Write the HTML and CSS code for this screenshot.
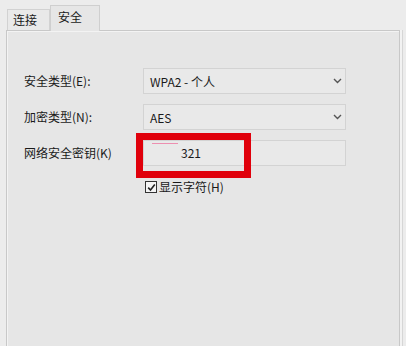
FILE: index.html
```html
<!DOCTYPE html>
<html lang="zh-CN">
<head>
<meta charset="utf-8">
<link rel="stylesheet" href="styles.css">
</head>
<body>
<div class="tabs">
  <div class="tab">连接</div>
  <div class="tab active">安全</div>
</div>
<div class="panel">
  <div class="row">
    <div class="label">安全类型(E):</div>
    <div class="field select"><span>WPA2 - 个人</span>
      <svg class="chev" width="9" height="6" viewBox="0 0 9 6"><path d="M1 1 L4.5 4.5 L8 1" fill="none" stroke="#555" stroke-width="1.4"/></svg>
    </div>
  </div>
  <div class="row">
    <div class="label">加密类型(N):</div>
    <div class="field select"><span>AES</span>
      <svg class="chev" width="9" height="6" viewBox="0 0 9 6"><path d="M1 1 L4.5 4.5 L8 1" fill="none" stroke="#555" stroke-width="1.4"/></svg>
    </div>
  </div>
  <div class="row">
    <div class="label">网络安全密钥(K)</div>
    <div class="field input">
      <span class="mark"></span>
      <span class="key">321</span>
      <div class="redbox"></div>
    </div>
  </div>
  <div class="checkrow">
    <span class="box">
      <svg width="9" height="9" viewBox="0 0 9 9"><path d="M1.2 4.6 L3.5 7 L7.8 1.6" fill="none" stroke="#222" stroke-width="1.6"/></svg>
    </span>
    <span class="checklabel">显示字符(H)</span>
  </div>
</div>
</body>
</html>
```

FILE: styles.css
```css
html, body {
  margin: 0;
  padding: 0;
}
body {
  width: 406px;
  height: 346px;
  overflow: hidden;
  background: #ececec;
  font-family: "Noto Sans CJK SC", "Noto Sans", sans-serif;
  font-size: 12px;
  color: #1a1a1a;
}
.tabs {
  display: flex;
  align-items: flex-end;
  height: 30px;
  padding-left: 7px;
  box-sizing: border-box;
}
.tab {
  box-sizing: border-box;
  height: 21px;
  padding: 2px 0 0 5px;
  width: 43px;
  border: 1px solid #d2d2d2;
  border-bottom: none;
  background: #e9e9e9;
  line-height: 16px;
}
.tab.active {
  height: 26px;
  width: 50px;
  padding: 3px 0 0 7px;
  background: #e6e6e6;
  border-color: #cfcfcf;
  margin-bottom: -1px;
  position: relative;
  z-index: 1;
}
.panel {
  margin: 0 6px 0 6px;
  height: 330px;
  box-sizing: border-box;
  border: 1px solid #c8c8c8;
  box-shadow: inset 1px 1px 0 #f3f3f3, 2px 0 0 #f2f2f2, 3px 0 0 #d6d6d6;
  background: #e6e6e6;
  padding: 37px 0 0 17px;
  display: flex;
  flex-direction: column;
  gap: 10px;
}
.row {
  display: flex;
  align-items: center;
  height: 26px;
}
.label {
  width: 119px;
  line-height: 16px;
}
.field {
  position: relative;
  box-sizing: border-box;
  width: 203px;
  height: 26px;
  border: 1px solid #d3d3d3;
  background: #e9e9e9;
  display: flex;
  align-items: center;
  padding-left: 6px;
}
.select span {
  flex: 1;
}
.chev {
  margin-right: 3px;
}
.input {
  padding-left: 37px;
}
.key {
  line-height: 16px;
}
.mark {
  position: absolute;
  left: 8px;
  top: 2px;
  width: 26px;
  height: 1px;
  background: #ec8fb0;
}
.redbox {
  position: absolute;
  left: -8px;
  top: -8px;
  width: 115px;
  height: 45px;
  border: 7px solid #e0000b;
  box-sizing: border-box;
}
.checkrow {
  display: flex;
  align-items: center;
  margin-top: 3px;
  padding-left: 121px;
  gap: 2px;
}
.box {
  box-sizing: border-box;
  width: 12px;
  height: 12px;
  border: 1px solid #333;
  background: #f4f4f4;
  display: flex;
  align-items: center;
  justify-content: center;
}
.checklabel {
  line-height: 16px;
}
```
